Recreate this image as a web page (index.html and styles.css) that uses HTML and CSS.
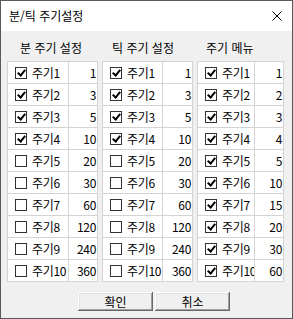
FILE: index.html
```html
<!DOCTYPE html>
<html lang="ko">
<head>
<meta charset="utf-8">
<link rel="stylesheet" href="styles.css">
</head>
<body>
<div class="window">
  <div class="titlebar">
    <span class="title">분/틱 주기설정</span>
    <svg class="close" width="10" height="10" viewBox="0 0 10 10"><path d="M0.5 0.5 L9.5 9.5 M9.5 0.5 L0.5 9.5" stroke="#000" stroke-width="1" fill="none"/></svg>
  </div>
  <div class="content">
    <div class="headers">
      <span class="hdr hdr-1">분 주기 설정</span>
      <span class="hdr hdr-2">틱 주기 설정</span>
      <span class="hdr hdr-3">주기 메뉴</span>
    </div>
    <div class="panels">
      <div class="panel panel-1">
        <div class="cell name"><span class="cb on"></span>주기1</div><div class="cell val">1</div>
        <div class="cell name"><span class="cb on"></span>주기2</div><div class="cell val">3</div>
        <div class="cell name"><span class="cb on"></span>주기3</div><div class="cell val">5</div>
        <div class="cell name"><span class="cb on"></span>주기4</div><div class="cell val">10</div>
        <div class="cell name"><span class="cb"></span>주기5</div><div class="cell val">20</div>
        <div class="cell name"><span class="cb"></span>주기6</div><div class="cell val">30</div>
        <div class="cell name"><span class="cb"></span>주기7</div><div class="cell val">60</div>
        <div class="cell name"><span class="cb"></span>주기8</div><div class="cell val">120</div>
        <div class="cell name"><span class="cb"></span>주기9</div><div class="cell val">240</div>
        <div class="cell name"><span class="cb"></span>주기10</div><div class="cell val">360</div>
      </div>
      <div class="panel panel-2">
        <div class="cell name"><span class="cb on"></span>주기1</div><div class="cell val">1</div>
        <div class="cell name"><span class="cb on"></span>주기2</div><div class="cell val">3</div>
        <div class="cell name"><span class="cb on"></span>주기3</div><div class="cell val">5</div>
        <div class="cell name"><span class="cb on"></span>주기4</div><div class="cell val">10</div>
        <div class="cell name"><span class="cb"></span>주기5</div><div class="cell val">20</div>
        <div class="cell name"><span class="cb"></span>주기6</div><div class="cell val">30</div>
        <div class="cell name"><span class="cb"></span>주기7</div><div class="cell val">60</div>
        <div class="cell name"><span class="cb"></span>주기8</div><div class="cell val">120</div>
        <div class="cell name"><span class="cb"></span>주기9</div><div class="cell val">240</div>
        <div class="cell name"><span class="cb"></span>주기10</div><div class="cell val">360</div>
      </div>
      <div class="panel panel-3">
        <div class="cell name"><span class="cb on"></span>주기1</div><div class="cell val">1</div>
        <div class="cell name"><span class="cb on"></span>주기2</div><div class="cell val">2</div>
        <div class="cell name"><span class="cb on"></span>주기3</div><div class="cell val">3</div>
        <div class="cell name"><span class="cb on"></span>주기4</div><div class="cell val">4</div>
        <div class="cell name"><span class="cb on"></span>주기5</div><div class="cell val">5</div>
        <div class="cell name"><span class="cb on"></span>주기6</div><div class="cell val">10</div>
        <div class="cell name"><span class="cb on"></span>주기7</div><div class="cell val">15</div>
        <div class="cell name"><span class="cb on"></span>주기8</div><div class="cell val">20</div>
        <div class="cell name"><span class="cb on"></span>주기9</div><div class="cell val">30</div>
        <div class="cell name"><span class="cb on"></span>주기10</div><div class="cell val">60</div>
      </div>
    </div>
    <div class="buttons">
      <button class="btn">확인</button>
      <button class="btn">취소</button>
    </div>
  </div>
</div>
</body>
</html>
```
FILE: styles.css
```css
* { box-sizing: border-box; }
html, body { margin: 0; padding: 0; }
body {
  font-family: "Noto Sans CJK KR", "Noto Sans", sans-serif;
  font-size: 12px;
  color: #000;
}
.window {
  width: 293px;
  height: 319px;
  border: 1px solid #5a5a5a;
  background: #f0f0f0;
  display: flex;
  flex-direction: column;
}
.titlebar {
  height: 30px;
  background: #fff;
  display: flex;
  align-items: center;
  justify-content: space-between;
  padding: 0 10px 0 8px;
}
.title { font-size: 12px; line-height: 14px; }
.close { display: block; }
.content {
  flex: 1;
  padding: 9px 0 0 6px;
  display: flex;
  flex-direction: column;
}
.headers {
  display: flex;
  height: 21px;
  font-size: 12px;
  line-height: 16px;
}
.hdr-1 { margin-left: 13px; width: 90px; }
.hdr-2 { margin-left: 2px; width: 94px; }
.hdr-3 { margin-left: 0; }
.panels {
  display: flex;
  gap: 4px;
}
.panel {
  display: grid;
  grid-auto-rows: 22px;
  background: #fff;
  border-top: 1px solid #d4d4d4;
  border-left: 1px solid #d4d4d4;
}
.panel-1 { grid-template-columns: 61px 29px; }
.panel-2 { grid-template-columns: 60px 30px; }
.panel-3 { grid-template-columns: 57px 29px; }
.cell {
  border-right: 1px solid #d4d4d4;
  border-bottom: 1px solid #d4d4d4;
  display: flex;
  align-items: center;
  font-size: 12px;
  letter-spacing: -0.3px;
  white-space: nowrap;
  overflow: hidden;
}
.name { padding-left: 7px; }
.val { justify-content: flex-end; padding-right: 1px; }
.cb {
  width: 12px;
  height: 12px;
  border: 1px solid #333;
  background: #fff;
  margin-right: 5px;
  flex: none;
  position: relative;
}
.cb.on::after {
  content: "";
  position: absolute;
  left: 3px;
  top: 0px;
  width: 3px;
  height: 6px;
  border-right: 2px solid #000;
  border-bottom: 2px solid #000;
  transform: rotate(40deg);
}
.buttons {
  display: flex;
  gap: 2px;
  margin: 10px 0 0 71px;
}
.btn {
  width: 75px;
  height: 19px;
  padding: 0;
  font-family: inherit;
  font-size: 12px;
  line-height: 14px;
  color: #000;
  background: #f0f0f0;
  border: none;
  box-shadow: inset -1px -1px #696969, inset 1px 1px #fff, inset -2px -2px #a0a0a0, inset 2px 2px #e3e3e3;
}
```
